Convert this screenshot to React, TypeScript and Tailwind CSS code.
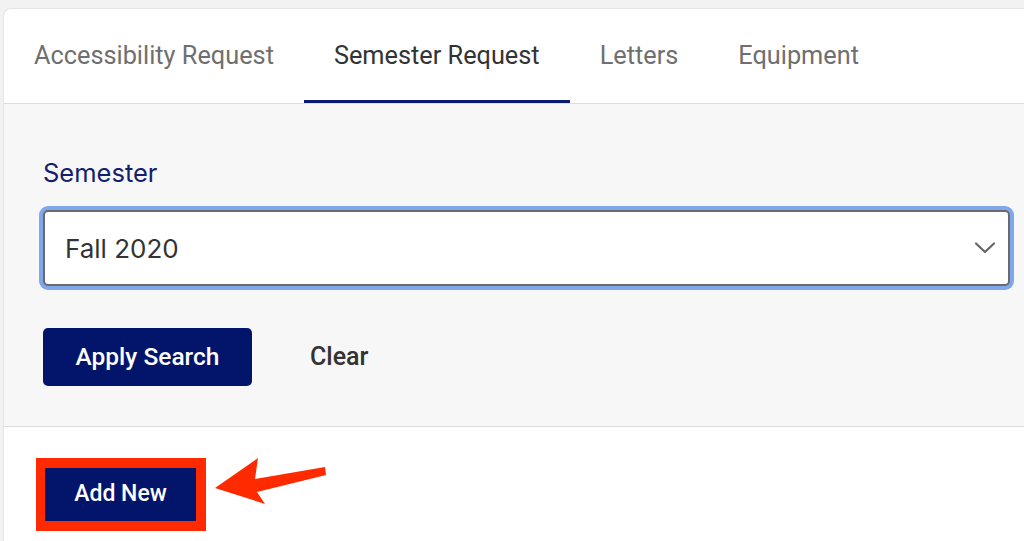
export default function App() {
  const tabs = [
    { label: "Accessibility Request", active: false },
    { label: "Semester Request", active: true },
    { label: "Letters", active: false },
    { label: "Equipment", active: false },
  ];

  return (
    <div className="h-[541px] overflow-hidden bg-[#f2f2f2] pt-2 pl-[3px]">
      <div className="relative h-[560px] w-[1060px] overflow-hidden rounded-tl-lg border-l border-t border-[#e4e4e4] bg-white">
        {/* tabs */}
        <div className="flex h-[95px] border-b border-[#dcdcdc]" style={{ fontFamily: "Roboto, sans-serif" }}>
          {tabs.map((t) => (
            <div
              key={t.label}
              className={
                t.active
                  ? "flex items-center border-b-[3px] border-[#0a1a6e] px-[30px] pt-[3px] text-[25.3px] text-[#333333]"
                  : "flex items-center border-b-[3px] border-transparent px-[30px] pt-[3px] text-[25.3px] text-[#6f6f6f]"
              }
            >
              {t.label}
            </div>
          ))}
        </div>

        {/* filters */}
        <div className="border-b border-[#dcdcdc] bg-[#f7f7f7] pb-[40px] pl-[39px] pr-[53px] pt-[54px]">
          <label
            className="block text-[25.5px] leading-[30px] text-[#12206e]"
            style={{ fontFamily: "Inter, sans-serif" }}
          >
            Semester
          </label>
          <div className="mt-[22px] flex h-[76px] items-center justify-between rounded-[5px] border-2 border-[#6a6a6a] bg-white pl-[20px] pr-[12px] ring-4 ring-[#7ea7ee]">
            <span className="text-[26px] text-[#333333]" style={{ fontFamily: "Inter, sans-serif" }}>
              Fall 2020
            </span>
            <svg width="22" height="14" viewBox="0 0 22 14" fill="none">
              <path d="M2 2.5 L11 11 L20 2.5" stroke="#666666" strokeWidth="2.2" strokeLinecap="round" strokeLinejoin="round" />
            </svg>
          </div>
          <div className="mt-[42px] flex items-center gap-[58px]" style={{ fontFamily: "Roboto, sans-serif" }}>
            <button className="h-[58px] w-[209px] rounded-[5px] bg-[#02156b] text-[24.5px] font-medium text-white">
              Apply Search
            </button>
            <button className="text-[25px] font-medium text-[#333333]">Clear</button>
          </div>
        </div>

        {/* actions */}
        <div className="pl-[32px] pt-[31px]" style={{ fontFamily: "Roboto, sans-serif" }}>
          <div className="inline-flex border-[10px] border-[#ff2a00] border-l-[9px]">
            <button className="h-[53px] w-[151px] bg-[#02156b] text-[23px] font-medium text-white">Add New</button>
          </div>
        </div>

        {/* annotation arrow */}
        <svg className="absolute left-[204px] top-[440px]" width="130" height="70" viewBox="0 0 130 70">
          <polygon points="7,39 50,9 47,30 117,18 118,26 49,43 57,55" fill="#ff2a00" />
        </svg>
      </div>
    </div>
  );
}
